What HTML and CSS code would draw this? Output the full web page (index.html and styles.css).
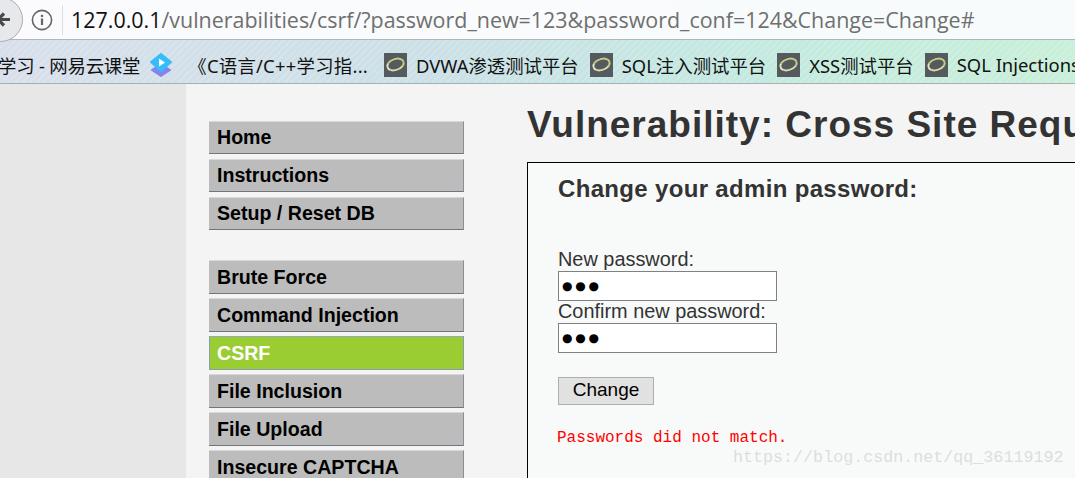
FILE: index.html
```html
<!DOCTYPE html>
<html lang="en">
<head>
<meta charset="UTF-8">
<meta name="viewport" content="width=device-width, initial-scale=1.0">
<title>Vulnerability: Cross Site Request Forgery</title>
<link rel="stylesheet" href="styles.css">
</head>
<body>
<div class="toolbar">
    <div class="back-button">
        <svg width="22" height="22" viewBox="0 0 22 22"><path d="M0 10.5H10M-2 10.5L4 4.5M-2 10.5L4 16.5" fill="none" stroke="#4a4a4a" stroke-width="3.2"/></svg>
    </div>
    <svg class="info-icon" width="22" height="22" viewBox="0 0 22 22">
        <circle cx="11" cy="11" r="9.6" fill="none" stroke="#666" stroke-width="1.6"/>
        <rect x="9.9" y="9.5" width="2.2" height="6.5" fill="#666"/>
        <rect x="9.9" y="5.8" width="2.2" height="2.2" fill="#666"/>
    </svg>
    <div class="url"><span class="host">127.0.0.1</span>/vulnerabilities/csrf/?password_new=123&amp;password_conf=124&amp;Change=Change#</div>
</div>
<div class="bookmarks">
    <span class="mark first">学习 - 网易云课堂</span>
    <svg class="cloud-icon" width="24" height="26" viewBox="0 0 24 26">
        <path d="M12 12L21 18L12 24L3 18Z" fill="#8484ee" stroke="#8484ee" stroke-width="2" stroke-linejoin="round"/>
        <path d="M12 2L22 10L12 19L2 10Z" fill="#35bdfa" stroke="#35bdfa" stroke-width="2" stroke-linejoin="round"/>
        <path d="M10 6.5L16 10.5L10 14.5Z" fill="#fff"/>
    </svg>
    <span class="mark wide">《C语言/C++学习指...</span>
    <i class="dvwa-icon"><b></b></i><span class="mark">DVWA渗透测试平台</span>
    <i class="dvwa-icon"><b></b></i><span class="mark">SQL注入测试平台</span>
    <i class="dvwa-icon"><b></b></i><span class="mark">XSS测试平台</span>
    <i class="dvwa-icon"><b></b></i><span class="mark">SQL Injections</span>
</div>
<div class="page">
    <div class="side"></div>
    <div class="menu">
        <div class="menu-group">
            <a class="menu-item">Home</a>
            <a class="menu-item">Instructions</a>
            <a class="menu-item">Setup / Reset DB</a>
        </div>
        <div class="menu-group lower">
            <a class="menu-item">Brute Force</a>
            <a class="menu-item">Command Injection</a>
            <a class="menu-item selected">CSRF</a>
            <a class="menu-item">File Inclusion</a>
            <a class="menu-item">File Upload</a>
            <a class="menu-item">Insecure CAPTCHA</a>
        </div>
    </div>
    <div class="body-content">
        <h1>Vulnerability: Cross Site Request Forgery (CSRF)</h1>
        <div class="vulnerable-box">
            <h3>Change your admin password:</h3>
            <label>New password:</label>
            <div class="pass-field">●●●</div>
            <label>Confirm new password:</label>
            <div class="pass-field">●●●</div>
            <button class="change-btn">Change</button>
            <pre class="error">Passwords did not match.</pre>
        </div>
    </div>
</div>
<div class="watermark">https://blog.csdn.net/qq_36119192</div>
</body>
</html>
```

FILE: styles.css
```css
html, body {
    margin: 0;
    padding: 0;
    height: 478px;
    overflow: hidden;
}

body {
    position: relative;
    font-family: "Liberation Sans", Arial, sans-serif;
    background-color: #f4f4f4;
}

.toolbar {
    display: flex;
    align-items: center;
    height: 39px;
    background: linear-gradient(90deg, #fbfbfd, #f7fbfb);
    border-bottom: 1px solid #a9b8bd;
}

.back-button {
    position: relative;
    z-index: 1;
    flex: none;
    display: flex;
    align-items: center;
    justify-content: flex-end;
    box-sizing: border-box;
    width: 45px;
    height: 45px;
    margin-left: -22px;
    border: 1px solid #a9acb0;
    border-radius: 50%;
    background-color: #e6e8eb;
}

.info-icon {
    margin-left: 8px;
    flex: none;
}

.url {
    margin-left: 9px;
    padding-left: 8px;
    height: 30px;
    line-height: 30px;
    border-left: 1px solid #dcdfe2;
    font-family: "Open Sans", sans-serif;
    font-size: 21.45px;
    color: #6f6f6f;
    white-space: nowrap;
}

.host {
    color: #111;
}

.bookmarks {
    display: flex;
    align-items: center;
    box-sizing: border-box;
    height: 44px;
    padding-top: 6px;
    overflow: hidden;
    white-space: nowrap;
    border-bottom: 1px solid #9fb3b5;
    background:
        repeating-linear-gradient(135deg, rgba(255,255,255,0.14) 0 2px, rgba(255,255,255,0) 2px 5px),
        linear-gradient(90deg, #d8dfeb 0%, #cbe0e6 40%, #c3e9e0 70%, #c8efd8 100%);
}

.mark {
    font-family: "Noto Sans", "Noto Sans CJK SC", sans-serif;
    font-size: 18.4px;
    color: #111;
}

.first {
    margin-left: -2px;
    letter-spacing: -0.2px;
}

.wide {
    margin-left: 15px;
    margin-right: 16px;
    letter-spacing: 0.25px;
}

.cloud-icon {
    margin-left: 9px;
    flex: none;
}

.dvwa-icon {
    flex: none;
    display: flex;
    align-items: center;
    justify-content: center;
    width: 23px;
    height: 24px;
    margin-right: 9px;
    background-color: #555a5e;
}

.dvwa-icon b {
    display: block;
    width: 19px;
    height: 13px;
    border: 2px solid #c4cd84;
    border-left-color: #e2e6c4;
    border-bottom-color: #d8dca8;
    border-radius: 50%;
    box-sizing: border-box;
    transform: rotate(-20deg);
}

.mark + .dvwa-icon {
    margin-left: 11px;
}

.wide + .dvwa-icon {
    margin-left: 0;
}

.page {
    display: flex;
    height: 394px;
    overflow: hidden;
}

.side {
    flex: none;
    width: 186px;
    background-color: #e7e7e7;
}

.menu {
    flex: none;
    width: 255px;
    margin-left: 23px;
    padding-top: 37px;
}

.menu-group {
    margin-bottom: 30px;
}

.menu-item {
    display: block;
    box-sizing: border-box;
    height: 33px;
    margin-bottom: 5px;
    padding-left: 8px;
    line-height: 30px;
    font-size: 19.6px;
    font-weight: bold;
    color: #000;
    background-color: #bcbcbc;
    border-top: 1px solid #d8d8d8;
    border-bottom: 1px solid #6f7680;
    border-right: 1px solid #8a8f96;
}

.lower .menu-item {
    height: 34px;
    margin-bottom: 4px;
    line-height: 33px;
}

.lower .selected {
    color: #fff;
    background-color: #9acd32;
    border: 1px solid #8a9ab0;
    border-top-color: #9aa6bd;
    padding-left: 7px;
}

.body-content {
    flex: none;
    margin-left: 63px;
    width: 700px;
}

h1 {
    margin: 16px 0 0;
    font-size: 37px;
    line-height: 50px;
    font-weight: bold;
    letter-spacing: 1px;
    color: #333;
    white-space: nowrap;
}

.vulnerable-box {
    box-sizing: border-box;
    height: 360px;
    margin-top: 12px;
    padding: 10px 0 0 30px;
    background-color: #f8faf9;
    border: 1px solid #000;
    color: #333;
}

h3 {
    margin: 0 0 44px;
    font-size: 24px;
    line-height: 32px;
    letter-spacing: 0.33px;
    font-weight: bold;
}

label {
    display: block;
    font-size: 19.9px;
    line-height: 20px;
    padding-bottom: 2px;
}

.pass-field {
    box-sizing: border-box;
    width: 219px;
    height: 30px;
    background-color: #fff;
    border: 1px solid #808080;
    padding-left: 3px;
    line-height: 28px;
    font-family: "DejaVu Sans", sans-serif;
    font-size: 12px;
    letter-spacing: 2.76px;
    color: #000;
}

.change-btn {
    display: block;
    width: 96px;
    height: 28px;
    margin: 24px 0 0;
    padding: 0 0 2px;
    font-family: "Liberation Sans", Arial, sans-serif;
    font-size: 19px;
    color: #000;
    background-color: #e1e1e1;
    border: 1px solid #adadad;
}

.error {
    margin: 23px 0 0 -1px;
    font-family: "Liberation Mono", monospace;
    font-size: 16px;
    line-height: 20px;
    color: #f00;
}

.watermark {
    position: absolute;
    left: 733px;
    top: 448px;
    font-family: "Liberation Mono", monospace;
    font-size: 16.7px;
    line-height: 20px;
    color: #dcdedd;
    white-space: nowrap;
}
```
